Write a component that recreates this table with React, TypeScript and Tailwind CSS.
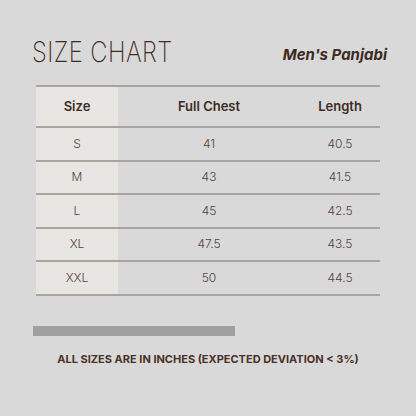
import React from "react";

const rows = [
  ["S", "41", "40.5"],
  ["M", "43", "41.5"],
  ["L", "45", "42.5"],
  ["XL", "47.5", "43.5"],
  ["XXL", "50", "44.5"],
];

export default function App() {
  return (
    <div
      className="w-[416px] h-[416px] bg-[#d9d9d9] flex flex-col overflow-hidden"
      style={{ fontFamily: "Inter, 'Open Sans', sans-serif" }}
    >
      <div className="flex items-end justify-between pl-[32px] pr-[29px] pt-[42px] h-[66px]">
        <div className="text-[28px] leading-none font-extralight text-[#3d2b22] tracking-[0.5px] scale-x-[0.85] origin-left">
          SIZE CHART
        </div>
        <div className="text-[15px] leading-none font-bold italic text-[#3d2b22] pb-[4px]">
          Men's Panjabi
        </div>
      </div>
      <div className="mt-[19px] ml-[36px] w-[344px] border-t-2 border-[#aaa39f]">
        <div className="grid grid-cols-[82px_182px_80px] h-[41px] border-b-2 border-[#aaa39f] text-[13px] font-semibold text-[#3d2b22]">
          <div className="bg-[#e8e6e3] flex items-center justify-center">Size</div>
          <div className="flex items-center justify-center">Full Chest</div>
          <div className="flex items-center justify-center">Length</div>
        </div>
        {rows.map((r) => (
          <div
            key={r[0]}
            className="grid grid-cols-[82px_182px_80px] h-[33.5px] border-b-2 border-[#aaa39f] text-[12px] font-light text-[#54433d]"
          >
            <div className="bg-[#e8e6e3] flex items-center justify-center">{r[0]}</div>
            <div className="flex items-center justify-center">{r[1]}</div>
            <div className="flex items-center justify-center">{r[2]}</div>
          </div>
        ))}
      </div>
      <div className="mt-[30px] ml-[33px] w-[202px] h-[10px] bg-[#a0a0a0]" />
      <div className="mt-[15px] text-center text-[11px] font-bold text-[#4a3228]">
        ALL SIZES ARE IN INCHES (EXPECTED DEVIATION &lt; 3%)
      </div>
    </div>
  );
}
